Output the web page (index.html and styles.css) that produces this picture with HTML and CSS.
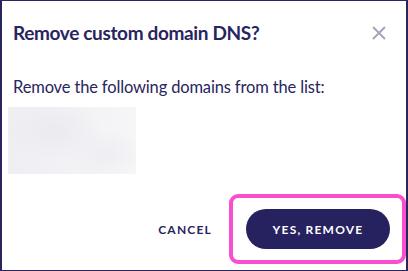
FILE: index.html
```html
<!DOCTYPE html>
<html lang="en">
<head>
<meta charset="utf-8">
<title>Remove custom domain DNS</title>
<link rel="stylesheet" href="styles.css">
</head>
<body>
<div class="dialog">
  <div class="header">
    <h2 class="title">Remove custom domain DNS?</h2>
    <button class="close" aria-label="Close">
      <svg width="14" height="14" viewBox="0 0 14 14"><path d="M1 1L13 13M13 1L1 13" stroke="#a7a4bd" stroke-width="2" stroke-linecap="butt"/></svg>
    </button>
  </div>
  <div class="content">
    <p class="message">Remove the following domains from the list:</p>
    <div class="domains"></div>
  </div>
  <div class="footer">
    <button class="btn-text">CANCEL</button>
    <div class="focus-wrap">
      <button class="btn-primary">YES, REMOVE</button>
      <span class="focus-ring"></span>
    </div>
  </div>
</div>
</body>
</html>
```
FILE: styles.css
```css
* { box-sizing: border-box; }
html, body { margin: 0; padding: 0; background: #fff; }
body { font-family: Lato, "Open Sans", sans-serif; color: #29255e; }
.dialog {
  width: 408px;
  height: 271px;
  border-style: solid;
  border-color: #29255e;
  border-width: 1px 2px 1px 2px;
  display: flex;
  flex-direction: column;
  padding: 0 0 0 6px;
}
.header {
  display: flex;
  align-items: center;
  justify-content: space-between;
  height: 64px;
  padding: 0 20px 0 5px;
}
.title {
  margin: 0;
  font-size: 19px;
  font-weight: 700;
  letter-spacing: -0.35px;
  line-height: 28px;
}
.close {
  border: 0;
  background: none;
  padding: 0;
  width: 14px;
  height: 14px;
  display: flex;
}
.content { padding-top: 10px; }
.message {
  margin: 0 0 0 5px;
  font-size: 16.5px;
  letter-spacing: -0.15px;
  line-height: 24px;
}
.domains {
  margin-top: 8px;
  width: 128px;
  height: 67px;
  background:
    radial-gradient(ellipse 50px 30px at 35% 35%, #ebeaef, rgba(235,234,239,0) 100%),
    radial-gradient(ellipse 40px 25px at 75% 70%, #eeedf2, rgba(238,237,242,0) 100%),
    linear-gradient(90deg, #efeef3, #f3f3f6 60%, #f6f6f8);
}
.footer {
  margin-top: auto;
  display: flex;
  justify-content: flex-end;
  align-items: center;
  gap: 34px;
  padding: 0 16px 21px 0;
}
.btn-text {
  border: 0;
  background: none;
  padding: 0;
  font-family: inherit;
  font-size: 12px;
  font-weight: 700;
  letter-spacing: 1.2px;
  color: #29255e;
}
.focus-wrap { position: relative; display: flex; }
.btn-primary {
  width: 144px;
  height: 40px;
  border: 0;
  border-radius: 20px;
  background: #26215f;
  color: #fff;
  font-family: inherit;
  font-size: 12px;
  font-weight: 700;
  letter-spacing: 1.2px;
}
.focus-ring {
  position: absolute;
  left: -17px;
  top: -15px;
  right: -16px;
  bottom: -15px;
  border: 4px solid #f94fcf;
  border-radius: 9px;
  pointer-events: none;
}
```
